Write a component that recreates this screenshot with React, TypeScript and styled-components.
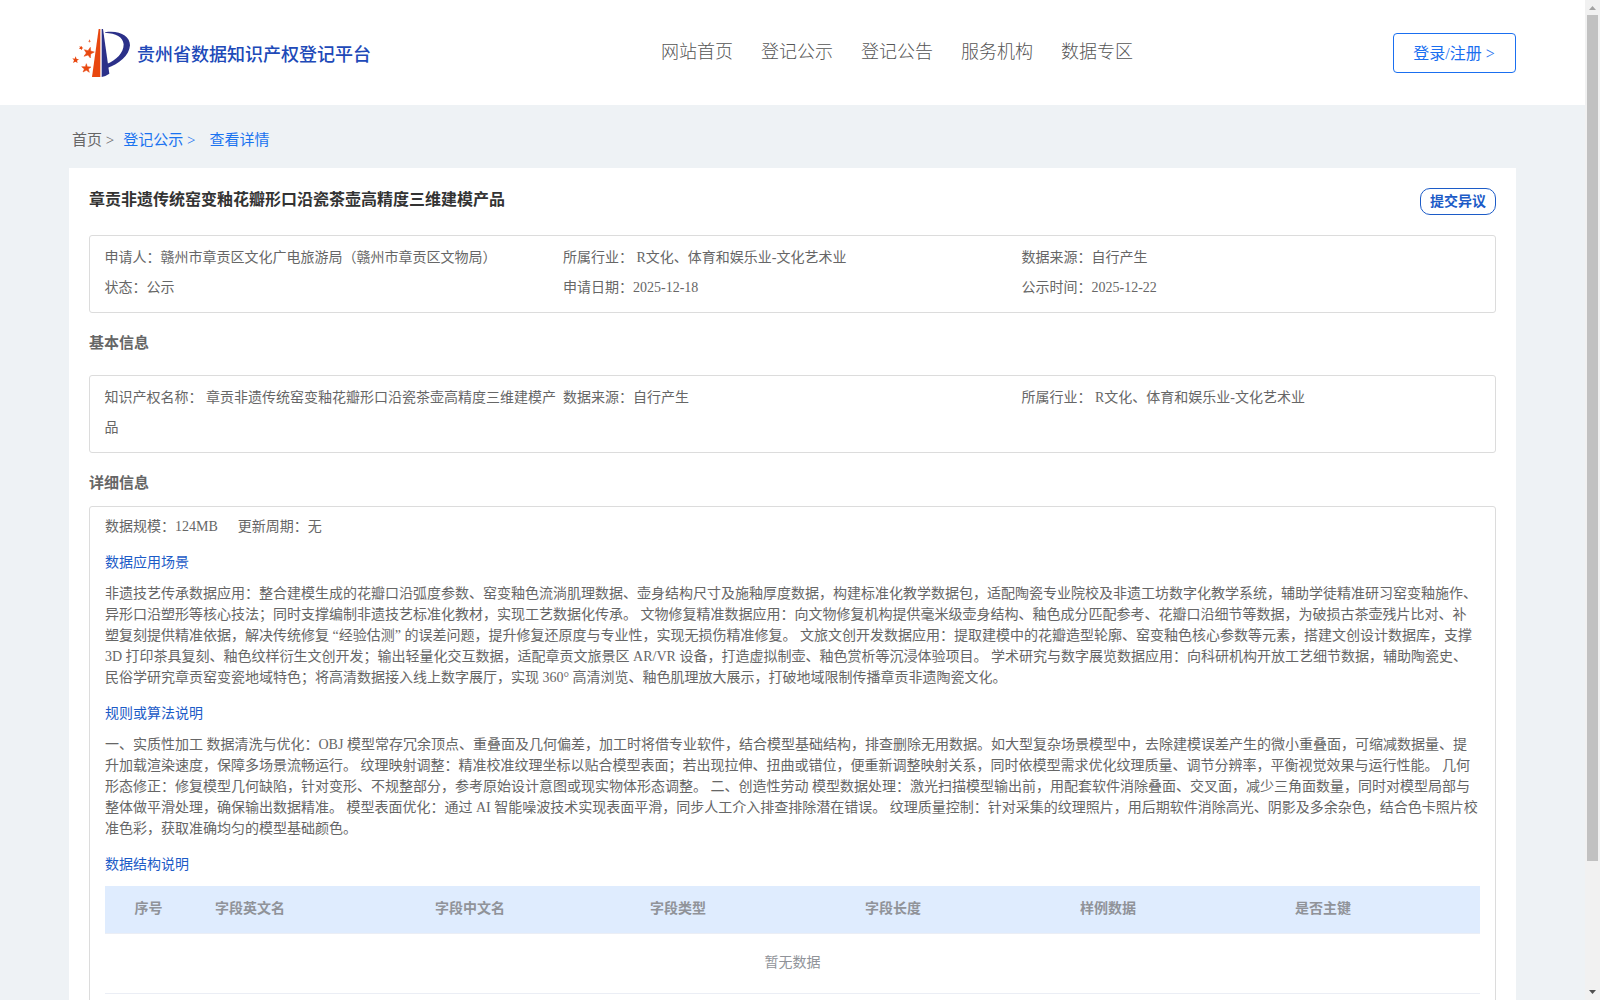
import React from "react";
import styled, { createGlobalStyle, css } from "styled-components";

const Global = createGlobalStyle`
  html, body { margin: 0; padding: 0; height: 100%; overflow: hidden; }
  *, *::before, *::after { box-sizing: border-box; }
  body {
    font-family: "Liberation Serif", "Noto Sans CJK SC", serif;
    font-size: 14px;
    font-weight: 400;
    color: #666;
    text-spacing-trim: space-all;
  }
`;

const Screen = styled.div`
  display: flex;
  width: 1600px;
  height: 1000px;
  overflow: hidden;
  background: #eef2f5;
`;

const Page = styled.div`
  width: 1585px;
  height: 1000px;
  overflow: hidden;
`;

const Header = styled.header`
  display: flex;
  align-items: flex-start;
  height: 105px;
  padding: 0 69px 0 72px;
  background: #fff;
`;

const Brand = styled.div`
  display: flex;
  width: 589px;
  padding-top: 28px;
`;

const BrandName = styled.span`
  margin: 13px 0 0 6px;
  font-size: 18px;
  font-weight: 500;
  line-height: 28px;
  color: #2049b8;
  white-space: nowrap;
`;

const Nav = styled.nav`
  display: flex;
  flex: 1;
  gap: 28px;
  padding-top: 38px;
`;

const NavItem = styled.a`
  font-size: 18px;
  font-weight: 300;
  line-height: 28px;
  color: #555;
  white-space: nowrap;
`;

const LoginButton = styled.button`
  width: 123px;
  height: 40px;
  margin-top: 33px;
  padding: 0 1px 2px 0;
  border: 1px solid #1a6ff0;
  border-radius: 4px;
  background: #fff;
  color: #1a6ff0;
  font: inherit;
  font-size: 16px;
`;

const Main = styled.main`
  padding: 0 69px;
`;

const Breadcrumb = styled.div`
  display: flex;
  height: 63px;
  padding: 22px 0 0 3px;
  font-size: 15px;
  line-height: 27px;
  white-space: pre;
`;

const Crumb = styled.span<{ $active?: boolean; $gap?: number }>`
  margin-right: ${(p) => p.$gap ?? 0}px;
  color: ${(p) => (p.$active ? "#1a73f0" : "#666")};
`;

const Card = styled.section`
  height: 1100px;
  padding: 0 20px;
  background: #fff;
`;

const TitleRow = styled.div`
  display: flex;
  justify-content: space-between;
  height: 67px;
  padding-top: 20px;
`;

const Title = styled.h1`
  margin: 0;
  font-size: 16px;
  font-weight: 700;
  line-height: 23px;
  color: #333;
`;

const ObjectionButton = styled.button`
  width: 76px;
  height: 27px;
  padding: 0;
  border: 1px solid #1c5bc7;
  border-radius: 10px;
  background: #fff;
  color: #1c5bc7;
  font: inherit;
  font-weight: 700;
  line-height: 23px;
`;

const box = css`
  border: 1px solid #dcdcdc;
  border-radius: 3px;
`;

const InfoGrid = styled.div`
  ${box}
  display: grid;
  grid-template-columns: repeat(3, 458.5px);
  grid-auto-rows: min-content;
  height: 78px;
  padding: 7px 15px 0 14.5px;
  line-height: 30px;
`;

const SectionTitle = styled.h2<{ $height: number }>`
  height: ${(p) => p.$height}px;
  margin: 0;
  padding-top: 15px;
  font-size: 15px;
  font-weight: 700;
  line-height: 30px;
`;

const DetailBox = styled.div`
  ${box}
  height: 700px;
  padding: 5px 15px 0;
`;

const Meta = styled.div`
  display: flex;
  gap: 20px;
  line-height: 30px;
`;

const SubTitle = styled.h3`
  height: 25px;
  margin: 10px 0 0;
  font-size: 14px;
  font-weight: 400;
  line-height: 22px;
  color: #1c5bc7;
`;

const Paragraph = styled.p`
  margin: 6px 0 15px;
  line-height: 21px;
`;

const Table = styled.div`
  display: flex;
  flex-direction: column;
  margin-top: 7px;
  color: #909399;
`;

const TableHead = styled.div`
  display: grid;
  grid-template-columns: 100px 220px 215px 215px 215px 215px 1fr;
  height: 48px;
  border-bottom: 1px solid #ebeef5;
  background: #dfecfe;
  font-weight: 700;
  line-height: 46px;
`;

const HeadCell = styled.div<{ $index?: boolean }>`
  padding-left: ${(p) => (p.$index ? 29.5 : 10)}px;
`;

const EmptyRow = styled.div`
  height: 60px;
  border-bottom: 1px solid #ebeef5;
  line-height: 58px;
  text-align: center;
`;

const Scrollbar = styled.div`
  display: flex;
  flex-direction: column;
  justify-content: space-between;
  align-items: center;
  width: 15px;
  height: 1000px;
  background: #f1f1f1;
`;

const ScrollThumb = styled.div`
  width: 11px;
  height: 846px;
  margin-bottom: auto;
  background: #c1c1c1;
`;

const ScrollArrow = styled.svg`
  display: block;
  width: 15px;
  height: 15px;
`;

const Logo = () => (
  <svg width="59" height="52" viewBox="36 24 177 156">
    <path d="M116 27H121V171H96Z" fill="#e8470f" />
    <path d="M125 27H129L148 161Q137 169 125 171Z" fill="#2b3089" />
    <path d="M135 37C178 30 210 48 210 76C208 108 176 132 142 144L140 132C169 121 191 99 191 73C189 50 168 40 135 38Z" fill="#2b3089" />
    <g fill="#e8470f">
      <g stroke="#e8470f" strokeWidth="1.5" strokeLinejoin="round">
        <path d="M91 82L92 93L103 96L92 102L91 114L84 105L72 109L79 99L73 89L84 92Z" />
        <path d="M79 131L82 140L93 141L85 147L88 157L79 151L69 156L73 147L65 140L76 140Z" />
      </g>
      <path d="M47 109L50 117L57 118L51 122L53 129L46 125L39 129L42 121L37 115L44 116Z" />
      <path d="M65 78L66 82L70 84L66 86L65 91L62 87L57 87L60 83L58 79L62 80Z" />
      <path d="M90 59L90 62L93 64L90 65L89 68L87 65L84 64L87 62L87 59Z" opacity="0.8" />
    </g>
  </svg>
);

const navItems = ["网站首页", "登记公示", "登记公告", "服务机构", "数据专区"];
const columns = ["序号", "字段英文名", "字段中文名", "字段类型", "字段长度", "样例数据", "是否主键"];
const summary = [
  "申请人：赣州市章贡区文化广电旅游局（赣州市章贡区文物局）",
  "所属行业： R文化、体育和娱乐业-文化艺术业",
  "数据来源：自行产生",
  "状态：公示",
  "申请日期：2025-12-18",
  "公示时间：2025-12-22",
];
const basics = [
  "知识产权名称： 章贡非遗传统窑变釉花瓣形口沿瓷茶壶高精度三维建模产品",
  "数据来源：自行产生",
  "所属行业： R文化、体育和娱乐业-文化艺术业",
];
const scenario =
  "非遗技艺传承数据应用：整合建模生成的花瓣口沿弧度参数、窑变釉色流淌肌理数据、壶身结构尺寸及施釉厚度数据，构建标准化教学数据包，适配陶瓷专业院校及非遗工坊数字化教学系统，辅助学徒精准研习窑变釉施作、异形口沿塑形等核心技法；同时支撑编制非遗技艺标准化教材，实现工艺数据化传承。 文物修复精准数据应用：向文物修复机构提供毫米级壶身结构、釉色成分匹配参考、花瓣口沿细节等数据，为破损古茶壶残片比对、补塑复刻提供精准依据，解决传统修复 “经验估测” 的误差问题，提升修复还原度与专业性，实现无损伤精准修复。 文旅文创开发数据应用：提取建模中的花瓣造型轮廓、窑变釉色核心参数等元素，搭建文创设计数据库，支撑 3D 打印茶具复刻、釉色纹样衍生文创开发；输出轻量化交互数据，适配章贡文旅景区 AR/VR 设备，打造虚拟制壶、釉色赏析等沉浸体验项目。 学术研究与数字展览数据应用：向科研机构开放工艺细节数据，辅助陶瓷史、民俗学研究章贡窑变瓷地域特色；将高清数据接入线上数字展厅，实现 360° 高清浏览、釉色肌理放大展示，打破地域限制传播章贡非遗陶瓷文化。";
const algorithm =
  "一、实质性加工 数据清洗与优化：OBJ 模型常存冗余顶点、重叠面及几何偏差，加工时将借专业软件，结合模型基础结构，排查删除无用数据。如大型复杂场景模型中，去除建模误差产生的微小重叠面，可缩减数据量、提升加载渲染速度，保障多场景流畅运行。 纹理映射调整：精准校准纹理坐标以贴合模型表面；若出现拉伸、扭曲或错位，便重新调整映射关系，同时依模型需求优化纹理质量、调节分辨率，平衡视觉效果与运行性能。 几何形态修正：修复模型几何缺陷，针对变形、不规整部分，参考原始设计意图或现实物体形态调整。 二、创造性劳动 模型数据处理：激光扫描模型输出前，用配套软件消除叠面、交叉面，减少三角面数量，同时对模型局部与整体做平滑处理，确保输出数据精准。 模型表面优化：通过 AI 智能噪波技术实现表面平滑，同步人工介入排查排除潜在错误。 纹理质量控制：针对采集的纹理照片，用后期软件消除高光、阴影及多余杂色，结合色卡照片校准色彩，获取准确均匀的模型基础颜色。";

export default function App() {
  return (
    <>
      <Global />
      <Screen>
        <Page>
          <Header>
            <Brand>
              <Logo />
              <BrandName>贵州省数据知识产权登记平台</BrandName>
            </Brand>
            <Nav>
              {navItems.map((item) => (
                <NavItem key={item}>{item}</NavItem>
              ))}
            </Nav>
            <LoginButton>登录/注册 &gt;</LoginButton>
          </Header>
          <Main>
            <Breadcrumb>
              <Crumb $gap={9}>首页 &gt;</Crumb>
              <Crumb $active $gap={14}>登记公示 &gt;</Crumb>
              <Crumb $active>查看详情</Crumb>
            </Breadcrumb>
            <Card>
              <TitleRow>
                <Title>章贡非遗传统窑变釉花瓣形口沿瓷茶壶高精度三维建模产品</Title>
                <ObjectionButton>提交异议</ObjectionButton>
              </TitleRow>
              <InfoGrid>
                {summary.map((item) => (
                  <div key={item}>{item}</div>
                ))}
              </InfoGrid>
              <SectionTitle $height={62}>基本信息</SectionTitle>
              <InfoGrid>
                {basics.map((item) => (
                  <div key={item}>{item}</div>
                ))}
              </InfoGrid>
              <SectionTitle $height={53}>详细信息</SectionTitle>
              <DetailBox>
                <Meta>
                  <span>数据规模：124MB</span>
                  <span>更新周期：无</span>
                </Meta>
                <SubTitle>数据应用场景</SubTitle>
                <Paragraph>{scenario}</Paragraph>
                <SubTitle>规则或算法说明</SubTitle>
                <Paragraph>{algorithm}</Paragraph>
                <SubTitle>数据结构说明</SubTitle>
                <Table>
                  <TableHead>
                    {columns.map((name, i) => (
                      <HeadCell key={name} $index={i === 0}>{name}</HeadCell>
                    ))}
                  </TableHead>
                  <EmptyRow>暂无数据</EmptyRow>
                </Table>
              </DetailBox>
            </Card>
          </Main>
        </Page>
        <Scrollbar>
          <ScrollArrow viewBox="0 0 15 15">
            <path d="M4 10L7.5 6L11 10Z" fill="#a3a3a3" />
          </ScrollArrow>
          <ScrollThumb />
          <ScrollArrow viewBox="0 0 15 15">
            <path d="M4 5L7.5 9L11 5Z" fill="#505050" />
          </ScrollArrow>
        </Scrollbar>
      </Screen>
    </>
  );
}
